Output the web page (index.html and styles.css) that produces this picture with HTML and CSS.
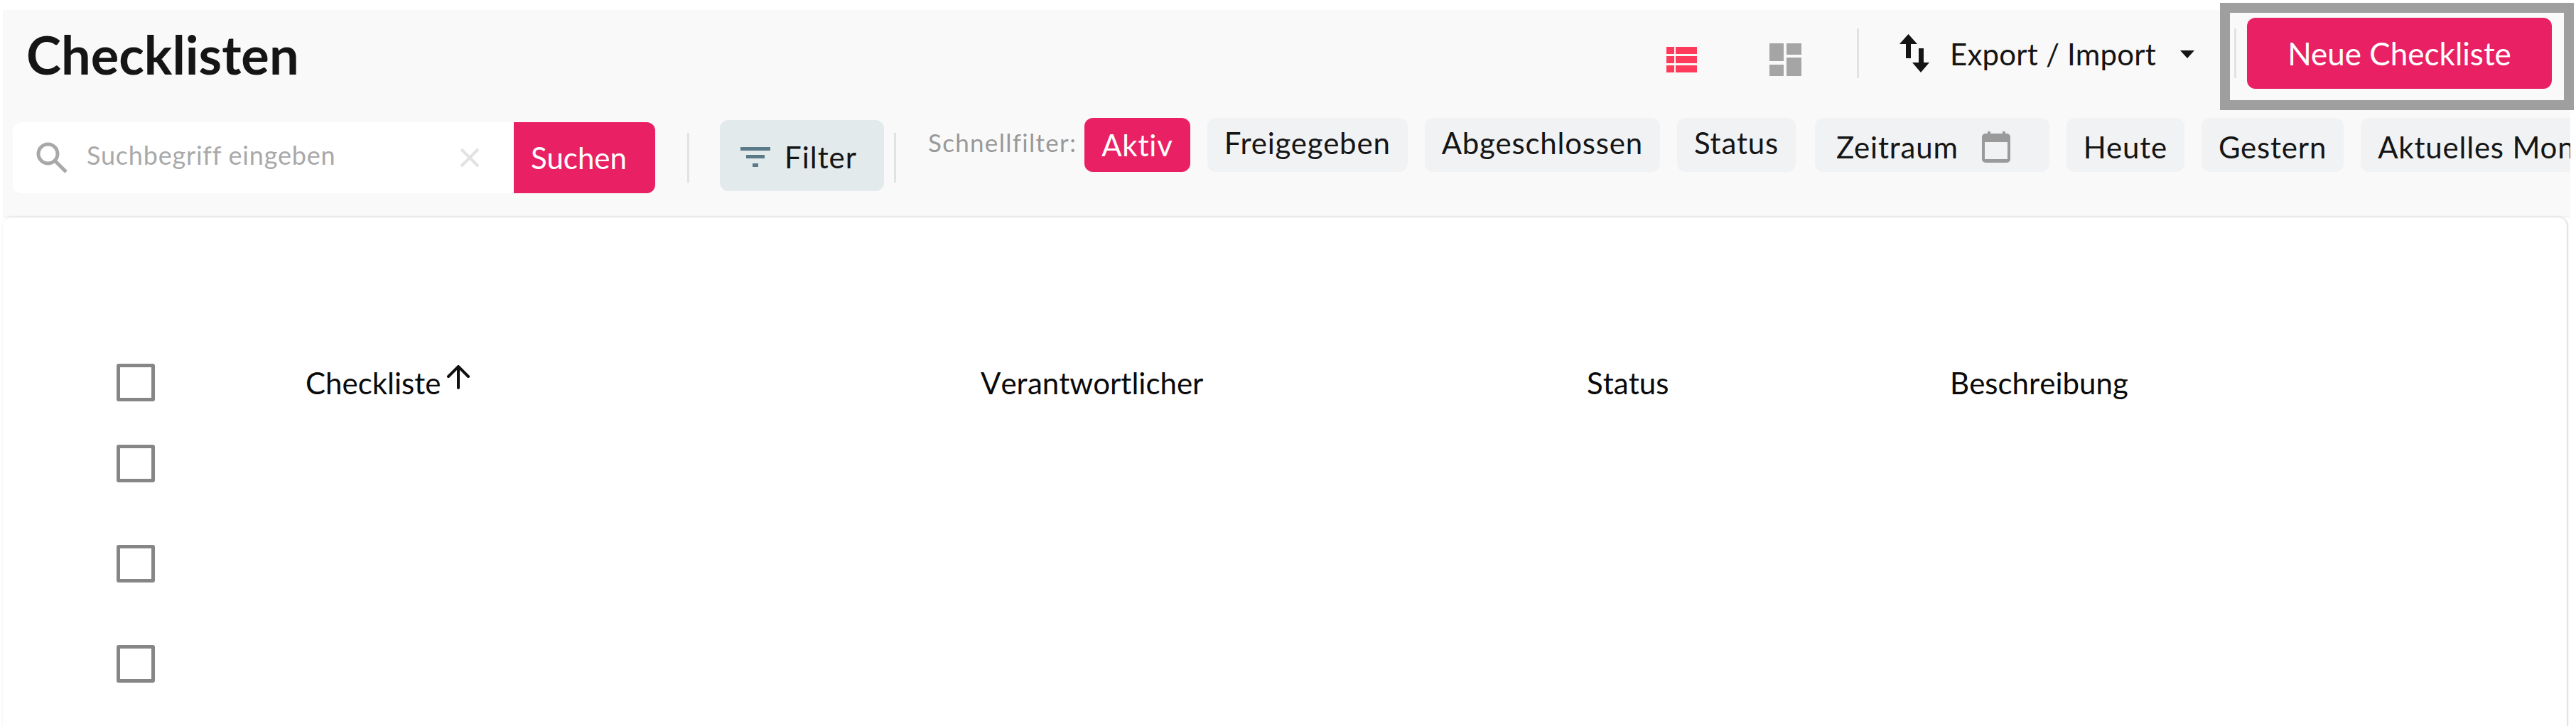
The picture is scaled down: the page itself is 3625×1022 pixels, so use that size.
FILE: index.html
```html
<!DOCTYPE html>
<html lang="de">
<head>
  <meta charset="UTF-8">
  <title>Checklisten</title>
  <link rel="stylesheet" href="styles.css">
</head>
<body>
  <div class="page">
    <div class="toolbar">
      <div class="title-row">
        <h1>Checklisten</h1>
        <svg class="view-icon list-icon" viewBox="0 0 43 36"><path d="M0 0h11v10H0zM13 0h30v10H13zM0 13h11v10H0zM13 13h30v10H13zM0 26h11v10H0zM13 26h30v10H13z"/></svg>
        <svg class="view-icon grid-icon" viewBox="0 0 45 46"><path d="M0 0h20v25H0zM24 0h21v16H24zM24 20h21v26H24zM0 30h20v16H0z"/></svg>
        <span class="sep sep-export"></span>
        <svg class="swap-icon" viewBox="0 0 42 54"><path d="M12.500 0 25 14h-9v20H9V14H0zM27 20h7v20h8L30 54 18 40h9z"/></svg>
        <span class="export-label">Export / Import</span>
        <span class="caret"></span>
        <span class="sep sep-new"></span>
        <button class="new-btn">Neue Checkliste</button>
      </div>
      <div class="filter-row">
        <div class="search">
          <svg class="search-icon" viewBox="0 0 44 44"><circle cx="16.500" cy="16.500" r="13.500"/><path d="M26 26 42 42"/></svg>
          <span class="placeholder">Suchbegriff eingeben</span>
          <svg class="clear-icon" viewBox="0 0 28 28"><path d="M2 2 26 26M26 2 2 26"/></svg>
          <button class="search-btn">Suchen</button>
        </div>
        <span class="sep sep-search"></span>
        <button class="filter-btn">
          <svg class="filter-icon" viewBox="0 0 42 28"><path d="M0 0h42v5H0zM8 11h26v5H8zM17 23h8v5h-8z"/></svg>
          Filter
        </button>
        <span class="sep sep-filter"></span>
        <span class="quick-label">Schnellfilter:</span>
        <div class="chips">
          <span class="chip chip-on">Aktiv</span>
          <span class="chip chip-up">Freigegeben</span>
          <span class="chip chip-up">Abgeschlossen</span>
          <span class="chip chip-up">Status</span>
          <span class="chip chip-low chip-date">Zeitraum
            <svg class="cal-icon" viewBox="0 0 40 44"><path fill-rule="evenodd" d="M8 0h4v3h17V0h4v3h2a5 5 0 0 1 5 5v31a5 5 0 0 1-5 5H5a5 5 0 0 1-5-5V8a5 5 0 0 1 5-5h3zM4 15v24h32V15z"/></svg>
          </span>
          <span class="chip chip-low">Heute</span>
          <span class="chip chip-low">Gestern</span>
          <span class="chip chip-low">Aktuelles Monat</span>
        </div>
      </div>
    </div>
    <div class="card">
      <div class="table-head">
        <span class="checkbox"></span>
        <span class="col col-name">Checkliste
          <svg class="sort-icon" viewBox="0 0 34 34"><path d="M17 32V3M3 16 17 2l14 14"/></svg>
        </span>
        <span class="col col-owner">Verantwortlicher</span>
        <span class="col col-status">Status</span>
        <span class="col col-desc">Beschreibung</span>
      </div>
      <div class="table-row"><span class="checkbox"></span></div>
      <div class="table-row"><span class="checkbox"></span></div>
      <div class="table-row"><span class="checkbox"></span></div>
    </div>
  </div>
  <div class="highlight"></div>
</body>
</html>
```

FILE: styles.css
```css
:root {
  --pink: #e92063;
  --panel: #f9f9f9;
  --chip: #f1f2f4;
  --line: #e2e2e2;
  --text: #151515;
}
html, body {
  height: 100%;
}
body {
  margin: 0;
  background: #fff;
  color: var(--text);
  font-family: Lato, sans-serif;
  overflow: hidden;
  position: relative;
}
button {
  border: none;
  font-family: inherit;
  color: inherit;
}
.page {
  padding: 14px 8px 0 4px;
}
.toolbar {
  background: var(--panel);
  height: 292px;
  box-shadow: inset 0 -2px 2px -1px #ececec;
}
.title-row {
  display: flex;
  align-items: flex-start;
  height: 152px;
  padding: 11px 26px 0 33px;
  box-sizing: border-box;
}
h1 {
  margin: 12px auto 0 0;
  font-size: 74px;
  line-height: 80px;
  font-weight: 700;
}
.sep {
  flex: none;
  width: 3px;
  height: 70px;
  background: var(--line);
}
.view-icon {
  flex: none;
}
.list-icon {
  width: 43px;
  height: 36px;
  margin-top: 41px;
  fill: #ff3b5c;
}
.grid-icon {
  width: 45px;
  height: 46px;
  margin: 36px 0 0 102px;
  fill: #a5a5a5;
}
.sep-export {
  margin: 15px 0 0 78px;
}
.swap-icon {
  flex: none;
  width: 42px;
  height: 54px;
  margin: 23px 0 0 57px;
  fill: #151515;
}
.export-label {
  margin: 27px 0 0 29px;
  font-size: 42px;
  line-height: 48px;
  letter-spacing: 0.2px;
}
.caret {
  flex: none;
  margin: 46px 0 0 34px;
  border-style: solid;
  border-width: 11px 10.500px 0;
  border-color: #151515 transparent transparent;
}
.sep-new {
  margin: 15px 0 0 56px;
}
.new-btn {
  flex: none;
  width: 429px;
  height: 100px;
  margin-left: 15px;
  border-radius: 12px;
  background: var(--pink);
  color: #fff;
  font-size: 44px;
}
.filter-row {
  display: flex;
  align-items: flex-start;
  padding-left: 14px;
  overflow: hidden;
  width: 3613px;
  box-sizing: border-box;
}
.search {
  flex: none;
  display: flex;
  align-items: center;
  width: 904px;
  height: 100px;
  margin-top: 6px;
  background: #fff;
  border-radius: 12px;
}
.search-icon {
  flex: none;
  width: 44px;
  height: 44px;
  margin: 0 0 0 33px;
  fill: none;
  stroke: #a8a8a8;
  stroke-width: 5;
}
.placeholder {
  margin: 0 0 8px 27px;
  font-size: 36px;
  letter-spacing: 0.8px;
  color: #a9a9a9;
}
.clear-icon {
  flex: none;
  width: 28px;
  height: 28px;
  margin-left: auto;
  stroke: #e2e2e2;
  stroke-width: 4;
}
.search-btn {
  flex: none;
  width: 199px;
  height: 100px;
  margin-left: 48px;
  padding: 0 39px 0 23px;
  border-radius: 0 12px 12px 0;
  background: var(--pink);
  color: #fff;
  font-size: 42px;
}
.sep-search {
  margin: 21px 0 0 45px;
}
.filter-btn {
  flex: none;
  display: flex;
  align-items: center;
  width: 231px;
  height: 100px;
  margin: 3px 0 0 43px;
  padding: 4px 0 0 29px;
  border-radius: 12px;
  background: #e3eaec;
  font-size: 42px;
  letter-spacing: 1px;
}
.filter-icon {
  flex: none;
  width: 42px;
  height: 28px;
  margin-right: 20px;
  fill: #5b7a88;
}
.sep-filter {
  margin: 21px 0 0 14px;
}
.quick-label {
  flex: none;
  margin: 12px 0 0 45px;
  font-size: 35px;
  line-height: 44px;
  color: #999;
  letter-spacing: 1.300px;
}
.chips {
  display: flex;
  gap: 24px;
  margin-left: 11px;
}
.chip {
  flex: none;
  display: flex;
  align-items: center;
  height: 76px;
  padding: 0 24px;
  border-radius: 12px;
  background: var(--chip);
  font-size: 42px;
  letter-spacing: 0.8px;
  white-space: nowrap;
}
.chip-on {
  background: var(--pink);
  color: #fff;
}
.chip-up {
  height: 70px;
  padding-bottom: 6px;
}
.chip-low {
  height: 70px;
  padding-top: 6px;
}
.chip-date {
  margin-left: 3px;
  padding: 6px 55px 0 30px;
}
.cal-icon {
  flex: none;
  width: 40px;
  height: 44px;
  margin-left: 33px;
  fill: #9a9a9a;
}
.card {
  height: 760px;
  margin-right: 5px;
  background: #fff;
  border-radius: 12px 12px 0 0;
  box-shadow: 1px 0 3px rgba(0, 0, 0, 0.22);
}
.table-head {
  display: flex;
  align-items: center;
  height: 53px;
  padding: 206px 0 0 160px;
  font-size: 42px;
  font-kerning: none;
  color: #0a0a0a;
}
.table-row {
  display: flex;
  padding: 88px 0 0 160px;
}
.table-head + .table-row {
  padding-top: 61px;
}
.checkbox {
  flex: none;
  width: 54px;
  height: 53px;
  box-sizing: border-box;
  border: 5px solid #868686;
  border-radius: 3px;
}
.col {
  flex: none;
  white-space: nowrap;
}
.col-name {
  display: flex;
  margin-left: 212px;
  width: 950px;
}
.sort-icon {
  width: 34px;
  height: 34px;
  margin: 0 0 8px 8px;
  fill: none;
  stroke: #111;
  stroke-width: 4;
  stroke-linecap: round;
}
.col-owner {
  width: 853px;
}
.col-status {
  width: 511px;
}
.highlight {
  position: absolute;
  left: 3124px;
  top: 4px;
  width: 470px;
  height: 123px;
  border: 14px solid #9f9f9f;
}
```
